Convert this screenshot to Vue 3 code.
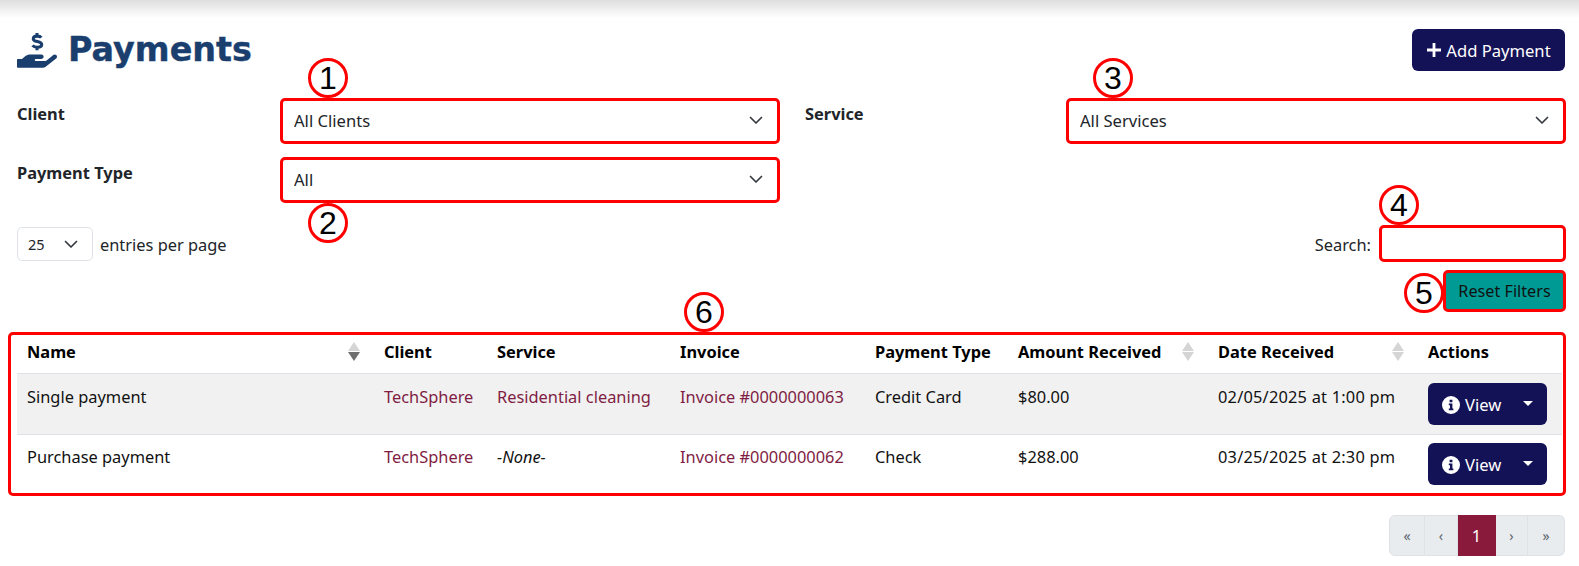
<script setup>
const filters = [
  { label: 'Client', value: 'All Clients' },
  { label: 'Service', value: 'All Services' },
  { label: 'Payment Type', value: 'All' }
]
const columns = [
  { name: 'Name', sort: 'desc' },
  { name: 'Client' },
  { name: 'Service' },
  { name: 'Invoice' },
  { name: 'Payment Type' },
  { name: 'Amount Received', sort: 'none' },
  { name: 'Date Received', sort: 'none' },
  { name: 'Actions' }
]
const rows = [
  { name: 'Single payment', client: 'TechSphere', service: 'Residential cleaning', invoice: 'Invoice #0000000063', type: 'Credit Card', amount: '$80.00', date: '02/05/2025 at 1:00 pm' },
  { name: 'Purchase payment', client: 'TechSphere', service: null, invoice: 'Invoice #0000000062', type: 'Check', amount: '$288.00', date: '03/25/2025 at 2:30 pm' }
]
const pages = ['«', '‹', '1', '›', '»']
const marks = [1, 2, 3, 4, 5, 6]
</script>

<template>
  <div class="page">
    <div class="topshade"></div>
    <header class="head">
      <h1 class="title">
        <svg class="hand" viewBox="0 0 576 512" aria-hidden="true">
          <path d="M565.3 328.1c-11.8-10.7-30.2-10-42.6 0L430.3 402c-11.3 9.1-25.4 14-40 14H272c-8.8 0-16-7.2-16-16s7.2-16 16-16h78.3c15.9 0 30.7-10.9 33.3-26.6 3.3-20-12.1-37.4-31.6-37.4H192c-27 0-53.1 9.3-74.1 26.3L71.4 384H16c-8.8 0-16 7.2-16 16v96c0 8.8 7.2 16 16 16h356.8c14.5 0 28.6-4.9 40-14l151.2-121c15.2-12.2 16.4-35.2 1.3-49z" fill="#1a3e6e"/>
          <path d="M350 78c-10-14-30-22-60-22-34 0-56 14-56 40 0 50 122 26 122 80 0 26-26 40-64 40-32 0-56-10-68-26M288 12v44M288 216v44" fill="none" stroke="#1a3e6e" stroke-width="44"/>
        </svg>
        <span>Payments</span>
      </h1>
      <button class="btn add">
        <svg class="plus" viewBox="0 0 16 16"><path d="M8 1v14M1 8h14" fill="none" stroke="#fff" stroke-width="2.800"/></svg>
        <span class="addt">Add Payment</span>
      </button>
    </header>

    <section class="filters">
      <template v-for="f in filters" :key="f.label">
        <label class="flabel">{{ f.label }}</label>
        <div class="selwrap big">
          <select class="sel">
            <option>{{ f.value }}</option>
          </select>
          <svg class="chev" viewBox="0 0 16 16"><path d="M2.500 5.500 8 11l5.500-5.500" fill="none" stroke="#343a40" stroke-width="1.700" stroke-linecap="round" stroke-linejoin="round"/></svg>
        </div>
      </template>
    </section>

    <div class="tools">
      <div class="length">
        <div class="selwrap small">
          <select class="sel"><option>25</option></select>
          <svg class="chev" viewBox="0 0 16 16"><path d="M2.500 5.500 8 11l5.500-5.500" fill="none" stroke="#343a40" stroke-width="1.700" stroke-linecap="round" stroke-linejoin="round"/></svg>
        </div>
        <span>entries per page</span>
      </div>
      <div class="search">
        <span>Search:</span>
        <input class="searchbox" type="text" />
      </div>
    </div>
    <div class="resetrow"><button class="reset">Reset Filters</button></div>

    <div class="tablewrap">
      <table class="grid">
        <colgroup>
          <col class="c1" /><col class="c2" /><col class="c3" /><col class="c4" />
          <col class="c5" /><col class="c6" /><col class="c7" /><col class="c8" />
        </colgroup>
        <thead>
          <tr>
            <th v-for="c in columns" :key="c.name">
              <div class="thin">
                <span>{{ c.name }}</span>
                <svg v-if="c.sort" class="sort" viewBox="0 0 12 19">
                  <path d="M6 0 12 9H0z" fill="#d5d5d5"/>
                  <path d="M6 19 12 10H0z" :fill="c.sort === 'desc' ? '#6f6f6f' : '#d5d5d5'"/>
                </svg>
              </div>
            </th>
          </tr>
        </thead>
        <tbody>
          <tr v-for="r in rows" :key="r.name">
            <td>{{ r.name }}</td>
            <td><a class="link">{{ r.client }}</a></td>
            <td>
              <a v-if="r.service" class="link">{{ r.service }}</a>
              <em v-else>-None-</em>
            </td>
            <td><a class="link">{{ r.invoice }}</a></td>
            <td>{{ r.type }}</td>
            <td>{{ r.amount }}</td>
            <td class="date">{{ r.date }}</td>
            <td class="acts">
              <button class="btn view">
                <svg class="info" viewBox="0 0 18 18">
                  <path fill="#fff" fill-rule="evenodd" d="M9 0a9 9 0 1 1 0 18A9 9 0 0 1 9 0zM7.600 3.800h2.800v2.400H7.600zM6.800 7.600h3.600v5h1v1.700H6.800v-1.700h1.200V9.300H6.800z"/>
                </svg>
                <span class="vt">View</span>
                <span class="caret"></span>
              </button>
            </td>
          </tr>
        </tbody>
      </table>
    </div>

    <nav class="pager">
      <a v-for="(p, i) in pages" :key="i" class="pg" :class="['p' + i, { on: p === '1' }]">{{ p }}</a>
    </nav>

    <span v-for="m in marks" :key="m" class="mark" :class="'m' + m">{{ m }}</span>
  </div>
</template>

<style>
html, body { margin: 0; background: #fff; }
</style>

<style scoped>
.page {
  position: relative;
  box-sizing: border-box;
  width: 1579px;
  height: 566px;
  padding: 29px 13px 0 17px;
  overflow: hidden;
  font-family: "Noto Sans", "Open Sans", sans-serif;
  font-size: 16.4px;
  line-height: 24px;
  color: #212529;
  background: #fff;
}
.topshade {
  position: absolute;
  left: 0; right: 0; top: 0;
  height: 18px;
  background: linear-gradient(#dedede, #ffffff);
}
.head { display: flex; justify-content: space-between; align-items: flex-start; height: 42px; }
.title {
  display: flex; align-items: center; gap: 11px;
  margin: 3px 0 0; height: 36px;
  font-family: "DejaVu Sans", sans-serif;
  font-weight: 700; font-size: 33.400px; color: #1a3e6e;
  -webkit-text-stroke: 0.4px #1a3e6e;
}
.hand { width: 40px; height: 36px; flex: none; }
.btn {
  border: 0; border-radius: 6px; background: #141257; color: #fff;
  font: inherit; padding: 0;
}
.add {
  display: flex; align-items: center; justify-content: center; gap: 4px;
  width: 153px; height: 42px; margin-right: 1px; font-size: 16.6px;
}
.addt { padding-top: 1px; }
.plus { width: 16px; height: 16px; flex: none; }

.filters {
  display: grid;
  grid-template-columns: 263px 500px 286px 500px;
  row-gap: 13px;
  margin-top: 27px;
}
.flabel { font-weight: 700; padding-top: 4px; color: #212529; }
.filters > :nth-child(3) { margin-left: 25px; }
.big { height: 46px; }
.selwrap { position: relative; box-sizing: border-box; }
.sel {
  appearance: none; -webkit-appearance: none;
  box-sizing: border-box; width: 100%; height: 100%;
  background: #fff; color: #212529; font: inherit; outline: none;
}
.big .sel { border: 3px solid #fe0000; border-radius: 5px; padding: 0 0 0 11px; font-size: 16.6px; }
.big .chev { position: absolute; right: 16px; top: 14px; width: 16px; height: 16px; pointer-events: none; }

.tools { display: flex; justify-content: space-between; align-items: center; height: 37px; margin-top: 22px; }
.length { display: flex; align-items: center; gap: 7px; }
.small { width: 76px; height: 34px; margin-top: 1px; }
.length > span, .search > span { position: relative; top: 1px; }
.small .sel { border: 1px solid #dee2e6; border-radius: 5px; padding: 0 0 0 10px; font-size: 14.500px; }
.small .chev { position: absolute; right: 14px; top: 9px; width: 16px; height: 16px; pointer-events: none; }
.search { display: flex; align-items: center; gap: 8px; }
.searchbox {
  box-sizing: border-box; width: 187px; height: 37px; padding: 0 8px;
  border: 3px solid #fe0000; border-radius: 5px; outline: none; background: #fff;
}
.resetrow { display: flex; justify-content: flex-end; margin-top: 8px; }
.reset {
  box-sizing: border-box; width: 123px; height: 42px; padding: 0;
  border: 3px solid #fe0000; border-radius: 5px;
  background: #009a94; color: #111; font: inherit; font-size: 16.2px;
}

.tablewrap {
  box-sizing: border-box;
  margin: 20px 0 0 -9px;
  height: 164px;
  padding: 0 1px 0 6px;
  border: 3px solid #fe0000; border-radius: 5px;
}
.grid { width: 100%; table-layout: fixed; border-collapse: collapse; color: #111; }
.c1 { width: 357px; } .c2 { width: 113px; } .c3 { width: 183px; } .c4 { width: 195px; }
.c5 { width: 143px; } .c6 { width: 200px; } .c7 { width: 210px; } .c8 { width: 144px; }
th { text-align: left; height: 38px; padding: 0 10px 4px; box-sizing: border-box; font-weight: 700; border-bottom: 1px solid #dee2e6; color: #000; }
.thin { display: flex; justify-content: space-between; align-items: center; }
.sort { width: 12px; height: 19px; flex: none; margin-right: 4px; }
td { vertical-align: top; height: 61px; box-sizing: border-box; padding: 11px 10px 0; white-space: nowrap; border-bottom: 1px solid #dee2e6; }
td.acts { padding: 9px 10px 0; }
td.date { letter-spacing: 0.2px; }
tbody tr:first-child td { background: #f1f1f1; }
tbody tr:last-child td { border-bottom: 0; height: 58px; padding-top: 10px; }
tbody tr:last-child td.acts { padding-top: 8px; }
em { font-style: italic; }
.link { color: #7f1d44; }
.view { display: flex; align-items: center; width: 119px; height: 42px; padding: 0 14px; font-size: 16.6px; }
.info { width: 18px; height: 18px; flex: none; position: relative; top: 1px; }
.vt { margin-left: 5px; padding-top: 2px; }
.caret { margin-left: auto; border-top: 5px solid #fff; border-left: 5px solid transparent; border-right: 5px solid transparent; }

.pager {
  display: flex; justify-content: flex-end; margin: 19px 1px 0 0; height: 41px;
}
.pg {
  box-sizing: border-box; display: flex; align-items: center; justify-content: center;
  background: #e9ecef; color: #5c656d; border: 1px solid #dee2e6; border-left: 0; font-size: 14px;
}
.p0 { width: 36px; border-left: 1px solid #dee2e6; border-radius: 6px 0 0 6px; }
.p1 { width: 33px; }
.p2 { width: 38px; }
.p3 { width: 32px; }
.p4 { width: 37px; border-radius: 0 6px 6px 0; }
.on { background: #8a1a3b; color: #fff; border-color: #8a1a3b; font-size: 16.500px; }

.mark {
  position: absolute; box-sizing: border-box; width: 40px; height: 40px;
  display: flex; align-items: center; justify-content: center;
  border: 3px solid #fe0000; border-radius: 50%; background: #fff; color: #000;
  font-family: "Liberation Sans", sans-serif; font-size: 32px; line-height: 1;
}
.m1 { left: 308px; top: 58px; }
.m2 { left: 308px; top: 203px; }
.m3 { left: 1093px; top: 58px; }
.m4 { left: 1379px; top: 185px; }
.m5 { left: 1404px; top: 273px; }
.m6 { left: 684px; top: 292px; }
</style>
